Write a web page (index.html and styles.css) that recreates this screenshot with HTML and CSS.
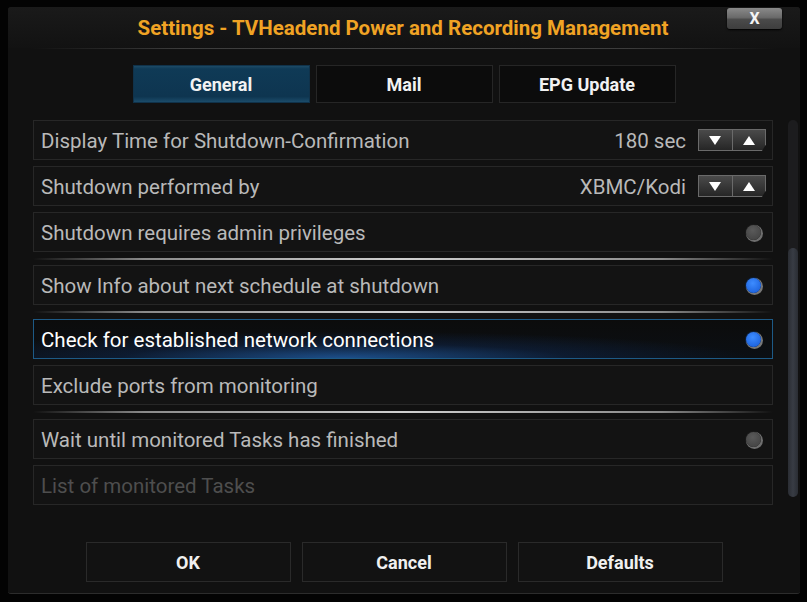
FILE: index.html
```html
<!DOCTYPE html>
<html>
<head>
<meta charset="utf-8">
<link rel="stylesheet" href="styles.css">
</head>
<body>
<div class="dialog">
  <div class="header">
    <div class="title">Settings - TVHeadend Power and Recording Management</div>
    <div class="close">X</div>
  </div>
  <div class="hline"></div>
  <div class="tabs">
    <div class="tab active">General</div>
    <div class="tab">Mail</div>
    <div class="tab">EPG Update</div>
  </div>
  <div class="content">
    <div class="list">
      <div class="row">
        <span class="label">Display Time for Shutdown-Confirmation</span>
        <span class="value">180 sec</span>
        <span class="spin"><span class="down"></span><span class="up"></span></span>
      </div>
      <div class="row">
        <span class="label">Shutdown performed by</span>
        <span class="value">XBMC/Kodi</span>
        <span class="spin"><span class="down"></span><span class="up"></span></span>
      </div>
      <div class="row">
        <span class="label">Shutdown requires admin privileges</span>
        <span class="radio"></span>
      </div>
      <div class="sep first"></div>
      <div class="row">
        <span class="label">Show Info about next schedule at shutdown</span>
        <span class="radio on"></span>
      </div>
      <div class="sep"></div>
      <div class="row focus">
        <span class="label">Check for established network connections</span>
        <span class="radio on"></span>
      </div>
      <div class="row">
        <span class="label">Exclude ports from monitoring</span>
      </div>
      <div class="sep"></div>
      <div class="row">
        <span class="label">Wait until monitored Tasks has finished</span>
        <span class="radio"></span>
      </div>
      <div class="row disabled">
        <span class="label">List of monitored Tasks</span>
      </div>
    </div>
    <div class="scroll"><div class="thumb"></div></div>
  </div>
  <div class="buttons">
    <div class="btn">OK</div>
    <div class="btn">Cancel</div>
    <div class="btn">Defaults</div>
  </div>
</div>
</body>
</html>
```
FILE: styles.css
```css
html, body {
  margin: 0;
  padding: 0;
  background: #030303;
  width: 807px;
  height: 602px;
  overflow: hidden;
  font-family: Roboto, "Liberation Sans", sans-serif;
}
.dialog {
  position: relative;
  margin: 7px 7px 0 8px;
  width: 792px;
  height: 587px;
  background: #111111;
  border-radius: 3px;
  box-sizing: border-box;
  border-bottom: 1px solid #2c2c2c;
}
.header {
  height: 41px;
  display: flex;
  align-items: center;
  justify-content: center;
  background: linear-gradient(#1a1a1a, #121212);
  border-radius: 3px 3px 0 0;
}
.title {
  color: #f0a324;
  font-weight: 700;
  font-size: 20.5px;
  margin-left: -2px;
  padding-top: 1px;
}
.close {
  position: absolute;
  top: 1px;
  left: 719px;
  width: 55px;
  height: 21px;
  border-radius: 3px;
  background: linear-gradient(#8a8a8a 0%, #6a6a6a 45%, #4a4a4a 55%, #3e3e3e 100%);
  box-shadow: 0 1px 2px #000;
  color: #f4f4f4;
  font-weight: 700;
  font-size: 16px;
  line-height: 21px;
  text-align: center;
}
.hline {
  height: 1px;
  margin: 0 23px;
  background: linear-gradient(90deg, rgba(60,60,60,0), #3c3c3c 20%, #444 50%, #3c3c3c 80%, rgba(60,60,60,0));
}
.tabs {
  display: flex;
  justify-content: center;
  gap: 6px;
  margin-top: 16px;
}
.tab {
  width: 177px;
  height: 38px;
  box-sizing: border-box;
  border: 1px solid #262626;
  background: #0c0c0c;
  color: #f2f2f2;
  font-weight: 700;
  font-size: 18px;
  display: flex;
  align-items: center;
  justify-content: center;
}
.tab.active {
  border-color: #10324a;
  background: linear-gradient(#1d4b66 0%, #0f3a56 8%, #0e3550 85%, #1b4c6a 100%);
}
.content {
  display: flex;
  margin-top: 17px;
  padding-left: 25px;
  gap: 15px;
}
.list {
  width: 740px;
  display: flex;
  flex-direction: column;
}
.row {
  height: 40px;
  box-sizing: border-box;
  border: 1px solid #272727;
  background: #131313;
  margin-bottom: 6px;
  display: flex;
  align-items: center;
  padding: 1px 7px 0 7px;
  color: #b9b9b9;
  font-size: 20.5px;
}
.row .label {
  flex: 1;
}
.row.focus {
  border-color: #1d5a86;
  color: #ffffff;
  background:
    radial-gradient(ellipse 55% 70% at 42% 100%, rgba(40,120,215,0.6), rgba(20,70,150,0.22) 55%, rgba(0,0,0,0) 100%),
    linear-gradient(#0c0c0c, #0b0f14);
}
.row.disabled {
  color: #4e4e4e;
}
.value {
  margin-right: 12px;
}
.spin {
  display: flex;
  width: 68px;
  height: 22px;
  margin-right: -1px;
  margin-top: -1px;
  box-sizing: border-box;
  border: 1px solid #6a6a6a;
  background: linear-gradient(#4a4a4a, #262626);
  clip-path: polygon(0 0, 100% 0, 100% 70%, 94% 100%, 0 100%);
}
.spin span {
  flex: 1;
  display: flex;
  align-items: center;
  justify-content: center;
}
.spin .down {
  border-right: 1px solid #6a6a6a;
}
.spin .down::after {
  content: "";
  border-left: 6px solid transparent;
  border-right: 6px solid transparent;
  border-top: 9px solid #ffffff;
}
.spin .up::after {
  content: "";
  border-left: 6px solid transparent;
  border-right: 6px solid transparent;
  border-bottom: 9px solid #ffffff;
}
.radio {
  width: 15px;
  height: 15px;
  border-radius: 50%;
  margin-right: 4px;
  margin-top: -1px;
  background: radial-gradient(circle at 45% 35%, #5a5a5a, #3e3e3e);
  box-shadow: 1px 1px 0 1px #6e6e6e, 0 0 0 1px #1a1a1a;
}
.radio.on {
  background: radial-gradient(circle at 45% 35%, #3d8cff, #1457d4);
  box-shadow: 1px 1px 0 1px #777, 0 0 0 1px #0d1f38;
}
.sep {
  height: 2px;
  margin: 0 0 6px 0;
  background: linear-gradient(90deg, rgba(120,120,120,0), #8a8a8a 15%, #d0d0d0 50%, #8a8a8a 85%, rgba(120,120,120,0));
}
.sep.first {
  margin-bottom: 5px;
}
.scroll {
  width: 10px;
  height: 377px;
  border-radius: 5px;
  background: #1c1c1e;
  display: flex;
  flex-direction: column;
  justify-content: flex-end;
}
.thumb {
  height: 249px;
  border-radius: 5px;
  background: linear-gradient(90deg, #2a2d33, #383c44, #2a2d33);
}
.buttons {
  display: flex;
  justify-content: center;
  gap: 11px;
  margin-top: 31px;
}
.btn {
  width: 205px;
  height: 40px;
  box-sizing: border-box;
  border: 1px solid #2a2a2a;
  background: #121212;
  color: #f0f0f0;
  font-weight: 700;
  font-size: 18px;
  display: flex;
  align-items: center;
  justify-content: center;
}
```
